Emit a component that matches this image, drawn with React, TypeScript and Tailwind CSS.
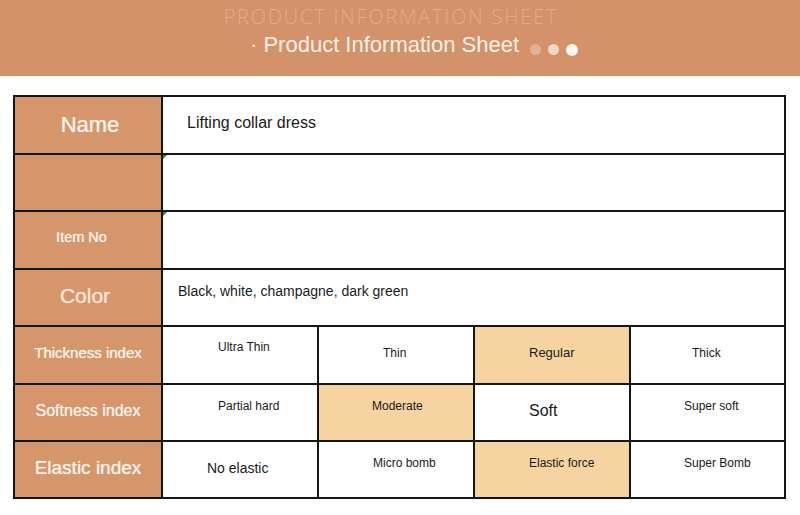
import React from "react";

function Label({ text, cls }: { text: string; cls: string }) {
  return (
    <div className={`w-[146px] shrink-0 bg-[#d6966b] flex items-center justify-center [text-shadow:0_0_1px_rgba(255,255,255,0.7)] ${cls}`}>
      <span>{text}</span>
    </div>
  );
}

type Cell = { t: string; hl?: boolean; cls: string };

function SubRow({ h, label, labelCls, cells }: { h: string; label: string; labelCls: string; cells: Cell[] }) {
  return (
    <div className={`flex ${h} border-t-2 border-[#151515]`}>
      <Label text={label} cls={labelCls} />
      {cells.map((c, i) => (
        <div
          key={i}
          className={`${i === 3 ? "flex-1" : "w-[156px]"} shrink-0 border-l-2 border-[#151515] flex items-center ${
            c.hl ? "bg-[#f5d4a1]" : "bg-white"
          }`}
        >
          <span className={`text-[#1a1a1a] ${c.cls}`}>{c.t}</span>
        </div>
      ))}
    </div>
  );
}

function Tick() {
  return (
    <span className="absolute left-0 top-0 w-0 h-0 border-t-[4px] border-r-[4px] border-t-[#2f8a2a] border-r-transparent" />
  );
}

export default function App() {
  return (
    <div className="w-[800px] h-[515px] bg-white overflow-hidden font-['Liberation_Sans',Arial,sans-serif]">
      <div className="h-[76px] bg-[#d4926a] flex flex-col items-center pt-[4px]">
        <div className="text-[20px] leading-[26px] font-light tracking-[1.8px] text-[#e2a98a] mr-[18px] font-['Open_Sans','Noto_Sans',sans-serif]">
          PRODUCT INFORMATION SHEET
        </div>
        <div className="mt-[1px] flex items-center pl-[28px]">
          <span className="text-[22px] leading-[28px] text-[#fdf1e6]">· Product Information Sheet</span>
          <div className="flex items-center gap-[7px] ml-[11px] mt-[9px]">
            <span className="w-[11px] h-[11px] rounded-full bg-[#e2b197]" />
            <span className="w-[11px] h-[11px] rounded-full bg-[#f1d6c6]" />
            <span className="w-[12px] h-[12px] rounded-full bg-[#fff8f2]" />
          </div>
        </div>
      </div>

      <div className="ml-[13px] mt-[19px] w-[773px] border-2 border-[#151515]">
        {/* Name */}
        <div className="flex h-[56px]">
          <Label text="Name" cls="text-[22px] text-[#fdf3ea] pl-[4px] pb-[2px]" />
          <div className="flex-1 border-l-2 border-[#151515] flex items-center pl-[24px] pb-[5px]">
            <span className="text-[16px] text-[#1a1a1a]">Lifting collar dress</span>
          </div>
        </div>
        {/* blank row */}
        <div className="flex h-[57px] border-t-2 border-[#151515]">
          <Label text="" cls="" />
          <div className="relative flex-1 border-l-2 border-[#151515]">
            <Tick />
          </div>
        </div>
        {/* Item No */}
        <div className="flex h-[58px] border-t-2 border-[#151515]">
          <Label text="Item No" cls="text-[14.5px] text-[#fdf3ea] pr-[13px] pb-[4px]" />
          <div className="relative flex-1 border-l-2 border-[#151515]">
            <Tick />
          </div>
        </div>
        {/* Color */}
        <div className="flex h-[57px] border-t-2 border-[#151515]">
          <Label text="Color" cls="text-[21px] text-[#fbe3d0] pr-[6px] pb-[4px]" />
          <div className="flex-1 border-l-2 border-[#151515] flex items-center pl-[15px] pb-[12px]">
            <span className="text-[14px] text-[#1a1a1a]">Black, white, champagne, dark green</span>
          </div>
        </div>
        <SubRow
          h="h-[58px]"
          label="Thickness index"
          labelCls="text-[15px] text-[#fdf3ea] pb-[4px]"
          cells={[
            { t: "Ultra Thin", cls: "text-[12px] pl-[55px] pb-[16px]" },
            { t: "Thin", cls: "text-[12px] pl-[64px] pb-[4px]" },
            { t: "Regular", hl: true, cls: "text-[13px] pl-[54px] pb-[4px]" },
            { t: "Thick", cls: "text-[12px] pl-[61px] pb-[4px]" },
          ]}
        />
        <SubRow
          h="h-[57px]"
          label="Softness index"
          labelCls="text-[16px] text-[#fdf3ea] pb-[3px]"
          cells={[
            { t: "Partial hard", cls: "text-[12px] pl-[55px] pb-[14px]" },
            { t: "Moderate", hl: true, cls: "text-[12px] pl-[53px] pb-[14px]" },
            { t: "Soft", cls: "text-[16px] pl-[54px] pb-[4px]" },
            { t: "Super soft", cls: "text-[12px] pl-[53px] pb-[14px]" },
          ]}
        />
        <SubRow
          h="h-[57px]"
          label="Elastic index"
          labelCls="text-[19px] text-[#fdf3ea] pb-[3px]"
          cells={[
            { t: "No elastic", cls: "text-[14px] pl-[44px] pb-[3px]" },
            { t: "Micro bomb", cls: "text-[12px] pl-[54px] pb-[13px]" },
            { t: "Elastic force", hl: true, cls: "text-[12px] pl-[54px] pb-[13px]" },
            { t: "Super Bomb", cls: "text-[12px] pl-[53px] pb-[13px]" },
          ]}
        />
      </div>
    </div>
  );
}
